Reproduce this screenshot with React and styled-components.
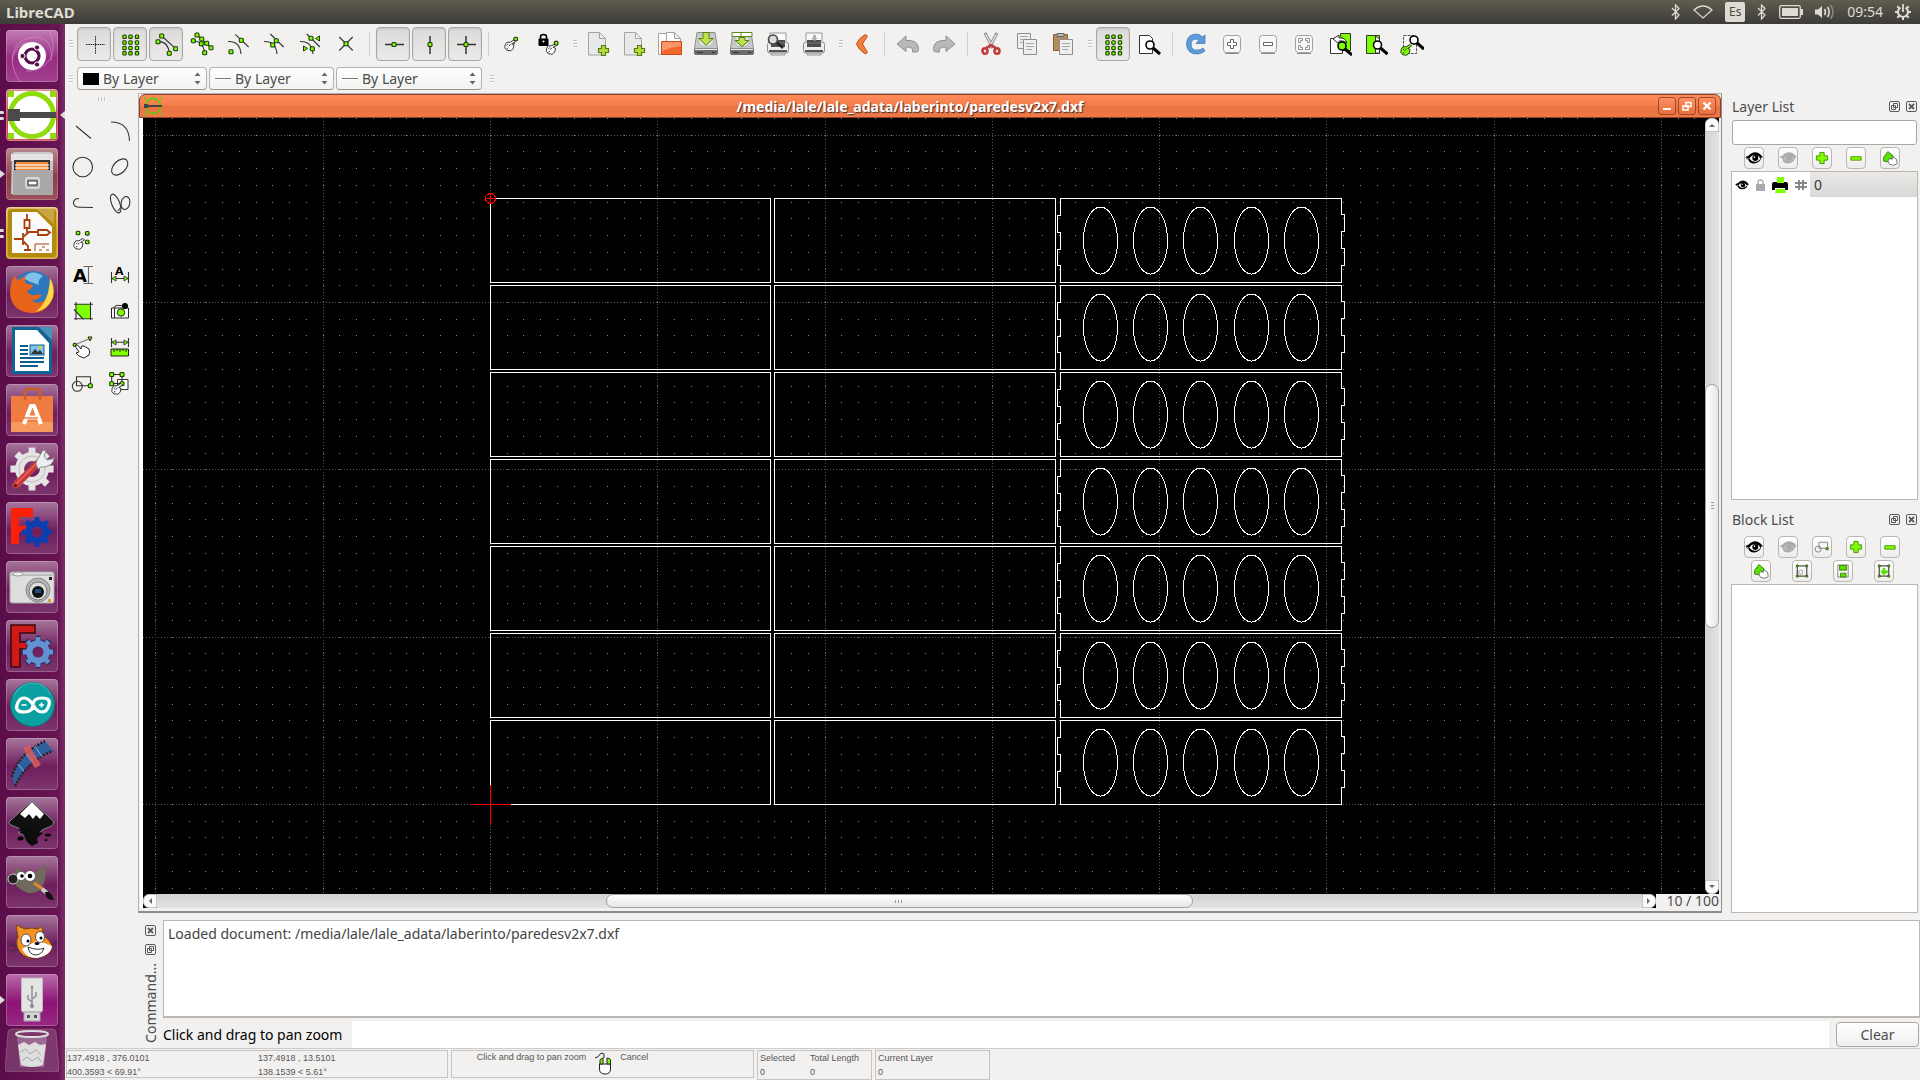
import React from "react";
import styled, { createGlobalStyle, css } from "styled-components";

const UI_FONT = '"Noto Sans", "Open Sans", sans-serif';
const INK = "#4c4c4c";
const LIME = "#7dff00";

const GlobalStyle = createGlobalStyle`
  *, *::before, *::after { box-sizing: border-box; }
  html, body { margin: 0; height: 100%; }
  body { background: #f2f1f0; color: ${INK}; font: 14px/20px ${UI_FONT}; overflow: hidden; }
  button, input, select { font: inherit; color: inherit; margin: 0; }
  svg { display: block; flex: none; }
`;

/* ------------------------------------------------------------ small marks */

const Dot = ({ x, y, r = 2 }) => (
  <rect x={x - r} y={y - r} width={r * 2} height={r * 2} rx="1" fill={LIME} stroke="#1d3a08" strokeWidth="1.1" />
);
const Dots = ({ at, r }) => at.map(([x, y]) => <Dot key={`${x}-${y}`} x={x} y={y} r={r} />);
const Hand = ({ x, y, s = 1, fill = "#fff" }) => (
  <path
    transform={`translate(${x} ${y}) scale(${s})`}
    d="M-6 -1L-4 -4L0 -4L5 -7L7 -5L2 -2L5 -1L4 4L1 6.500L-4 6L-6.500 3ZM-4 0L-2 -2M-1.500 1L.500 -1.500M-4 4l2-1"
    fill={fill} stroke="#222" strokeWidth="1.1" strokeLinejoin="round"
  />
);
const Lens = ({ x, y, fill = "#fff" }) => (
  <g stroke="#000">
    <path d={`M${x + 3} ${y + 3} l7 6`} strokeWidth="3" />
    <circle cx={x} cy={y} r="4" fill={fill} strokeWidth="1.6" />
  </g>
);
const GreenPlus = ({ x, y, s = 1 }) => (
  <path transform={`translate(${x} ${y}) scale(${s})`} d="M-2 -5h4v3h3v4h-3v3h-4v-3h-3v-4h3z" fill="#b6d93c" stroke="#4f8010" strokeWidth="1.2" />
);
const Page = ({ x, y, w, h, fill = "#e9e9e9" }) => (
  <path d={`M${x} ${y}h${w - 6}l6 6v${h - 6}h-${w}z M${x + w - 6} ${y}v6h6`} fill={fill} stroke="#a3a3a3" />
);
const line = { fill: "none", stroke: "#333", strokeWidth: 1.1 };

const Printer = () => (
  <>
    <path d="M4 9V1h16v8" fill="#fafafa" stroke="#999" />
    <rect x="1.500" y="10" width="21" height="11" rx="2.500" fill="#eee" stroke="#8a8a8a" />
    <path d="M5 8h14v7H5z" fill="#4d4d4d" />
    <path d="M5 11h14" stroke="#777" />
    <path d="M3 19h18" stroke="#555" strokeWidth="2" />
    <path d="M5 21h14v2H5z" fill="#ddd" stroke="#999" />
  </>
);
const Drive = () => (
  <>
    <path d="M3 .5h18l2.500 16H.5z" fill="#c9c9c9" stroke="#8b8b8b" />
    <ellipse cx="12" cy="9" rx="7.500" ry="6" fill="#e6e6e6" stroke="#b5b5b5" />
    <path d="M0 17h24v4q0 2-2 2H2q-2 0-2-2z" fill="#6d6d6d" />
    <path d="M1 17.500h22" stroke="#eee" />
    <path d="M3 20.500h6M18 20.500h3" stroke="#333" />
  </>
);
const Magnet = () => <path d="M2 9.500Q14 9 15 22" {...line} />;
const Undo = () => (
  <path d="M1 12L10 4v4.500q12-1 12.500 8 0 4-3 3.500h-3q2-5-6.500-5v4.500z" fill="#b9b9b9" stroke="#8f8f8f" strokeLinejoin="round" />
);
const KeyCap = () => (
  <>
    <rect x="3.500" y="3.500" width="17" height="17" rx="3" fill="#f7f7f7" stroke="#a0a0a0" />
    <path d="M5 21.500h14" stroke="#8a8a8a" />
  </>
);
const Grid = () => (
  <Dots r={1.7} at={[6.5, 12.5, 19].flatMap((x) => [4.7, 10.5, 16, 21.3].map((y) => [x, y]))} />
);
const Eye = ({ muted }) => {
  const c = muted ? "#aaa" : "#000";
  return (
    <>
      <path d="M1 9l3-1q4-5 10-4 4 1 7 6h-2q-1 6-8 7-7 0-7-6l-3-1z" fill={c} />
      <path d="M5 11q3-4 7-4 4 1 6 4-2 4-7 4-4-1-6-4z" fill={muted ? "#bdbdbd" : "#fff"} />
      <circle cx="12" cy="10.500" r="3.500" fill={c} />
      {!muted && <><path d="M1 10l3 3" stroke="#118" strokeWidth="1" /><circle cx="11" cy="9.500" r=".9" fill="#fff" /></>}
    </>
  );
};

const ICONS = {
  cross: <path d="M4 12.500h19M13.500 4v18" stroke="#222" strokeDasharray="1.500 .8" />,
  grid: <Grid />,
  ends: <><path d="M7.700 4L21.700 16.700M4 9.700Q14 9 15.300 21.300" {...line} /><Dots at={[[7.7, 4], [4, 9.7], [21.7, 16.7], [15.3, 21.3]]} /></>,
  onEntity: <><path d="M7 3L21 15.700M3.300 8.700Q13 9 14.700 20.700" {...line} /><Dots at={[[7, 3], [3.3, 8.7], [11.7, 7], [11.3, 11.7], [16.7, 11.3], [21, 15.7], [14.7, 20.7]]} /></>,
  center: <><path d="M9.300 2.300L22.700 15" {...line} /><Magnet /><Dots at={[[15.3, 8.3], [5, 19.7]]} /></>,
  middle: <><path d="M8.300 2L21.700 15" {...line} /><Magnet /><Dots at={[[14.3, 8.7], [10.7, 13]]} /></>,
  distance: <><path d="M8.700 2L22 15" {...line} /><Magnet /><Dots at={[[13, 6.3], [14.3, 16.7]]} /><path d="M21.500 4v5l-4-2.500zM5.500 14v5l4-2.500z" fill={LIME} stroke="#1d3a08" /></>,
  intersect: <><path d="M5.300 5L18.700 18.500M18.700 5L5.300 18.500" {...line} /><Dot x={12} y={11.7} /></>,
  horiz: <><path d="M4 12.500h19" {...line} strokeWidth="1.500" /><Dot x={13} y={12.5} /></>,
  vert: <><path d="M13 4v18" {...line} strokeWidth="1.500" /><Dot x={13} y={12.5} /></>,
  ortho: <><path d="M4 12.500h19M13 4v18" {...line} strokeWidth="1.500" /><Dot x={13} y={12.5} /></>,
  relZero: <><path d="M15 7l-1 5" {...line} /><Hand x={10} y={13.5} s={0.8} /><Dot x={15.7} y={7} r={1.8} /></>,
  lockZero: <><rect x="2.500" y="6.500" width="10" height="7.500" rx="1" /><path d="M4.500 7V5q0-2.500 3-2.500T10.500 5v2" fill="none" stroke="#000" strokeWidth="1.600" /><circle cx="7.500" cy="9.500" r="1" fill="#fff" /><Hand x={15.5} y={17} s={0.8} /><Dot x={20.2} y={11.2} r={1.8} /></>,
  doc: <><Page x={2.5} y={0.5} w={17} h={22.5} /><GreenPlus x={17.5} y={18.5} /></>,
  open: <><Page x={0.5} y={1.5} w={14} h={21} fill="#fbfbfb" /><Page x={8.5} y={0.5} w={14} h={21} fill="#fff" /><path d="M3.500 9.500h20v13h-20z" fill="#f0672c" stroke="#cf4a12" /><path d="M4 10h19v4q-9 1-19 5z" fill="#f9a27b" opacity=".8" /></>,
  save: <><Drive /><path d="M9 .5h6v6h4l-7 7-7-7h4z" fill="#bfe04f" stroke="#4f8010" /></>,
  saveAs: <><Drive /><path d="M2 .5h20v4H2z" fill="#fff" stroke="#5b8a17" /><path d="M11 1v3" stroke="#5b8a17" /><path d="M9 5.500h6v3h4l-7 6-7-6h4z" fill="#bfe04f" stroke="#4f8010" /></>,
  preview: <><Printer /><path d="M9 9l8 7" stroke="#222" strokeWidth="2.500" /><circle cx="7" cy="7.500" r="4.500" fill="#d8dcdc" stroke="#444" strokeWidth="1.600" /></>,
  print: <><Printer /><path d="M11 3h3v3h2l-3.500 3L9 6h2z" fill="#b0b0b0" /></>,
  back: <path d="M14 2.500l2.500 1.500-5 8 5 8.500-2.500 1.500q-7-5-8.500-10 1.500-5 8.500-9.500z" fill="#f0803f" stroke="#c4501a" strokeLinejoin="round" />,
  undo: <Undo />,
  redo: <g transform="translate(24 0) scale(-1 1)"><Undo /></g>,
  cut: <><path d="M6 1l8 15M18 1l-8 15" stroke="#888" strokeWidth="3" /><path d="M6.500 2l7 13M17.500 2l-7 13" stroke="#eee" strokeWidth="1.200" /><g fill="none" stroke="#c23b3b" strokeWidth="2.600"><ellipse cx="6" cy="19" rx="2.500" ry="2.800" /><ellipse cx="18" cy="19" rx="2.500" ry="2.800" /></g><path d="M7 16l5-3 5 3" stroke="#c23b3b" strokeWidth="2.400" fill="none" /></>,
  copy: <><path d="M2.500 1.500h13v15h-13z" fill="#eee" stroke="#8e8e8e" /><path d="M5 4.500h8M5 7.500h6M5 10.500h4" stroke="#aaa" /><path d="M8.500 7.500h13v15h-13z" fill="#eee" stroke="#8e8e8e" /><path d="M11 11.500h8M11 14.500h8M11 17.500h6" stroke="#aaa" /></>,
  paste: <><path d="M2.500 2.500h14v16h-14z" fill="#b58d5c" stroke="#83623a" /><path d="M6 1.500h7v3H6z" fill="#bbb" stroke="#666" /><path d="M8.500 7.500h13v15h-13z" fill="#eee" stroke="#8e8e8e" /><path d="M11 11.500h8M11 14.500h8M11 17.500h6" stroke="#aaa" /></>,
  draft: <><path d="M2.500 3.500h10l3 3v15h-13z" fill="#fff" stroke="#333" /><Lens x={13} y={13} /></>,
  redraw: <path d="M21 3v8.500h-9l3-3.500q-7-3-8 4 0 7 7 6 3 0 5-2l2 3q-4 3-8 3Q3 22 2.500 12 3 2 12.500 2q3.500 0 5.500 3z" fill="#5d9bd8" stroke="#3f7ebd" strokeWidth=".8" />,
  zoomIn: <><KeyCap /><path d="M10.500 7.500h3v3h3v3h-3v3h-3v-3h-3v-3h3z" fill="#fff" stroke="#666" /></>,
  zoomOut: <><KeyCap /><path d="M7.500 10.500h9v3h-9z" fill="#fff" stroke="#666" /></>,
  zoomAuto: <><KeyCap /><path d="M6.500 10.500v-4h4v2h-2v2zM13.500 6.500h4v4h-2v-2h-2zM17.500 13.500v4h-4v-2h2v-2zM10.500 17.500h-4v-4h2v2h2z" fill="#fff" stroke="#777" strokeWidth=".8" /></>,
  zoomPrev: <><path d="M2.500 6.500h12v15h-12z" fill="#fff" stroke="#333" /><path d="M12.500 1.500h10v17h-8z" fill={LIME} stroke="#333" /><path d="M5 7l6-4v3q6-1 8 5-4-3-8-2v3z" fill="#fff" stroke="#222" /><Lens x={14} y={14} fill={LIME} /></>,
  zoomWin: <><path d="M2.500 3.500h13v18h-13z" fill={LIME} stroke="#333" /><path d="M11.500 4l4 3v14h-4z" fill="#fff" stroke="#333" /><Lens x={13.500} y={13} /></>,
  pan: <><path d="M3.500 3.500h10l3 3v15h-13z" fill="#f7f7f7" stroke="#555" strokeDasharray="3 1" /><Hand x={6} y={18} s={0.8} fill={LIME} /><Lens x={14} y={8} /></>,

  line: <path d="M5 6l15 12.500" {...line} />,
  arc: <path d="M3 2q18 0 18.500 19" {...line} />,
  circle: <circle cx="11.700" cy="11" r="9.800" {...line} />,
  ellipse: <ellipse cx="11.700" cy="11" rx="9.800" ry="6" transform="rotate(-45 11.700 11)" {...line} />,
  hook: <path d="M8 6.500Q2.500 6.500 2.500 11t7 4.200l12.500.3" {...line} />,
  spline: <><ellipse cx="7.700" cy="11.500" rx="4" ry="10" transform="rotate(-22 7.700 11.500)" {...line} /><ellipse cx="17.500" cy="11" rx="4.300" ry="6.500" transform="rotate(12 17.500 11)" {...line} /><path d="M13 15l-3 4" {...line} /></>,
  points: <><Dots at={[[7, 5], [16.3, 5.3], [16.3, 14]]} r={1.8} /><Hand x={8} y={16} s={0.8} /></>,
  text: <><text x="2" y="18" fontFamily="DejaVu Sans" fontSize="18" fontWeight="700" fill="#000">A</text><path d="M12.500 2.500H22M12.500 19.500H22M17.500 2.500v17" {...line} stroke="#666" /></>,
  dim: <><text x="7" y="11" fontFamily="DejaVu Sans" fontSize="11" fontWeight="700" fill="#000">A</text><path d="M3.500 8v11M20.500 8v11M4 14.500h16" {...line} /><path d="M8 12v5l-4-2.500zM16 12v5l4-2.500z" fill={LIME} stroke="#222" strokeWidth=".8" /></>,
  hatch: <><path d="M5 4.300h14.500v14.500H12L5 11.500z" fill={LIME} /><path d="M5 2v18M19.500 2v18M3 4.300h19M3 18.800h19M3 9.500l9.500 10" {...line} /></>,
  camera: <><path d="M3.500 8v10h17V8z" fill="#fff" stroke="#222" /><path d="M6.500 8v10M6 7.500q2-3 5-2h3" {...line} /><circle cx="13" cy="12.500" r="3.700" fill={LIME} stroke="#222" /><circle cx="17" cy="6" r="3" /></>,
  modify: <><path d="M3.700 8.700L19 2.500" {...line} stroke="#777" /><Dot x={3.7} y={8.7} r={1.5} /><path d="M17 1h4l-2 4z" fill={LIME} stroke="#222" /><path d="M4 10l2.500-1 3.500 4 .5-3h2.500l5 3q1.500 3 0 6l-5 3q-3-1-5-2l-3-3 3-1z" fill="#fff" stroke="#222" /></>,
  measure: <><path d="M3.500 2v9M20.500 2v9M4 6.300h16" {...line} /><path d="M8 4v5L4 6.300zM16 4v5l4-2.700z" fill={LIME} stroke="#222" strokeWidth=".8" /><path d="M3 13h17.500v7H3z" fill={LIME} stroke="#222" /><path d="M6 13v3M9 13v2M12 13v3M15 13v2M18 13v3" stroke="#222" /></>,
  block: <><path d="M5.500 4.700h14v9H5.500z" {...line} /><circle cx="6.300" cy="14.300" r="5" {...line} /><Dot x={19.3} y={13.7} /></>,
  select: <><path d="M9.500 7.500h10.500v10H9.500z" fill="#fff" stroke="#333" /><path d="M3.700 2.500H14v9H3.700z" {...line} /><Dots at={[[3.7, 2.5], [14, 2.5], [3.7, 11.7], [14, 11.7]]} /><Hand x={9} y={17} s={0.8} /></>,
};

const PANEL_ICONS = {
  eye: <Eye />,
  eyeOff: <Eye muted />,
  plus: <path d="M8 4h5v4h4v5h-4v4H8v-4H4V8h4z" fill={LIME} stroke="#3f8a00" />,
  minus: <path d="M4.500 9h12v4h-12z" fill={LIME} stroke="#3f8a00" />,
  edit: <><path d="M3 10l5-7 6 5-2 5-5 2-4-1z" fill="#5be000" stroke="#2f7a00" /><path d="M8 14l2-3 3 1 1-3 4 3 1 5-4 2-5-1z" fill="#fff" stroke="#666" /></>,
  block: <><path d="M7 5h10v7H7z" fill="none" stroke="#777" /><circle cx="6" cy="13" r="3.500" fill="none" stroke="#777" /><Dot x={16.500} y={12.500} r={1.3} /></>,
  insert: <><path d="M5 4.500h11v12H5z" fill="none" stroke="#555" strokeWidth="1.500" /><circle cx="9" cy="12" r="2.500" fill="none" stroke="#999" /><Dots at={[[5, 4.5], [16, 4.5], [5, 16.500], [16, 16.500]]} r={1.2} /></>,
  floppy: <><path d="M4.500 3.500h12v14h-12z" fill="#fff" stroke="#777" /><path d="M6.500 4h8v5.500h-8zM7.500 13h6.500v4.500H7.500z" fill="#5be000" stroke="#2f7a00" /></>,
  insertNew: <><path d="M5 4.500h11v12H5z" fill="none" stroke="#555" strokeWidth="1.500" /><path d="M9 7h3v3h3v3h-3v2H9v-2H7v-3h2z" fill="#5be000" /><Dots at={[[5, 4.5], [16, 4.5], [5, 16.500], [16, 16.500]]} r={1.2} /></>,
};

/* ------------------------------------------------------------- launcher */

const GearShape = ({ cx, cy, r, teeth = 8, ...rest }) => (
  <g {...rest}>
    <circle cx={cx} cy={cy} r={r * 0.62} fill="none" strokeWidth={r * 0.45} />
    {Array.from({ length: teeth }, (_, i) => (
      <path key={i} d={`M${cx} ${cy - r * 0.75}V${cy - r * 1.08}`} strokeWidth={r * 0.34} transform={`rotate(${(360 / teeth) * i} ${cx} ${cy})`} />
    ))}
  </g>
);

const APPS = [
  { name: "Dash", tint: "#962780", art: <><g fill="none" stroke="#dd9bd0" strokeWidth=".7" opacity=".8"><path d="M6 30Q8 8 30 7q18 2 15 24M14 52Q-4 24 20 12M44 0q8 24-4 34-8 8-20 7" /></g><circle cx="26" cy="26" r="14" fill="#fff" /><circle cx="26" cy="26" r="7" fill="none" stroke="#5a0f4a" strokeWidth="3.200" /><g fill="#5a0f4a" stroke="#fff"><circle cx="16.500" cy="26" r="2.600" /><circle cx="31" cy="17.500" r="2.600" /><circle cx="31" cy="34.500" r="2.600" /></g></> },
  { name: "LibreCAD", tint: "#c8404e", pips: 2, active: true, art: <><rect x="2" y="2" width="48" height="48" fill="#fff" /><path d="M2 2h6v6H2zM44 2h6v6h-6zM2 44h6v6H2zM44 44h6v6h-6z" fill="#8fdc0a" /><circle cx="26" cy="26" r="21.500" fill="none" stroke="#8fdc0a" strokeWidth="5" /><path d="M2 20h12v3h36v6H14v3H2z" fill="#4a4a4a" /></> },
  { name: "Files", tint: "#8d3a44", pips: 1, art: <><path d="M6 6q1-2 3-2h35q2 0 3 2v40H5z" fill="#c9c9c9" /><path d="M5 6h42v7H5z" fill="#e3e3e3" /><path d="M8 12h36v12H8z" fill="#333" /><path d="M10 14h32v10H10z" fill="#f08b3e" /><path d="M9 17h34M9 20h34" stroke="#fbe3c8" strokeWidth="1.500" /><path d="M7 22h40v25H7z" fill="#a9a9a9" /><rect x="20" y="30" width="13" height="10" rx="2" fill="#a9a9a9" stroke="#d7d7d7" strokeWidth="2" /><rect x="22" y="33" width="9" height="4" fill="#fff" stroke="#333" /></> },
  { name: "KiCad", tint: "#c79c18", pips: 2, art: <><rect x="2" y="2" width="48" height="48" rx="3" fill="#b58a0c" /><path d="M6 5h25l15 15v26H6z" fill="#fbfbfb" /><path d="M31 2h17v15z" fill="#caa545" /><g fill="none" stroke="#a9400c" strokeWidth="1.800"><path d="M21 7v6M18.500 13h5v8h-5zM21 21v6M8 32h9M17 26v12M17 30l6-5h9M32 23h9l3 2.500-3 2.500h-9zM17 34l5 5v4M18 43h7" /><path d="M29 44v-7h14M36 40h3M33 43h3M40 43h3" strokeWidth="1" /></g></> },
  { name: "Firefox", art: <><circle cx="27" cy="25" r="20" fill="#2d78bd" /><path d="M17 12Q26 2 37 10q-6 4-4 9-8-2-16-7z" fill="#7fc4e8" /><path d="M44 12q6 10 3 20-6 15-21 15Q6 46 4 28 4 18 8 10q2 3 5 4 3-3 7-4-3 5 1 8l6 1q0 3-6 6 2 5 9 4 3-1 6 0-4 6-11 5 8 6 15-1 5-8 4-21z" fill="#e8641b" /><path d="M44 12q5 9 3 19-5 13-18 15 14-9 15-34z" fill="#fbd84a" /></> },
  { name: "LibreOffice Writer", art: <><path d="M6 2h27l13 13v34H6z" fill="#0f6595" /><path d="M9 5h22l12 13v28H9z" fill="#fff" /><path d="M33 2h13v13z" fill="#4793ba" /><path d="M14 21h8M14 25h8M14 29h8M14 33h24M14 37h24M14 41h18" stroke="#0f5f8e" strokeWidth="2" /><rect x="24" y="20" width="14" height="10" fill="#7cc4ea" stroke="#0f5f8e" /><path d="M25 29l4-5 3 3 2-2 3 4z" fill="#333" /><circle cx="34" cy="22.500" r="1.500" fill="#fc0" /></> },
  { name: "Ubuntu Software", art: <><path d="M5 12h42v36H5z" fill="#f07b40" /><path d="M5 38h42v10H5z" fill="#f5995f" /><path d="M19 16V8q0-3 3-3h9q3 0 3 3v8" fill="none" stroke="#cf5d28" strokeWidth="2.500" /><path d="M18 40l7-18h3l7 18M20 33.500h13" stroke="#fff" strokeWidth="4" fill="none" /><path d="M18 34h14" stroke="#f07b40" strokeWidth="1.500" /></> },
  { name: "System Settings", art: <><GearShape cx={26} cy={26} r={20} stroke="#e4e4e4" /><circle cx="26" cy="26" r="13" fill="none" stroke="#bdbdbd" /><path d="M10 42L32 20" stroke="#c63a3a" strokeWidth="7" strokeLinecap="round" /><path d="M10 41L31 20" stroke="#e66" strokeWidth="1.500" /><path d="M30 21q0-4 3-7l4-7 3 1-2 5 3 4 5-1 2-2q0 5-4 8-5 3-9 2l-3 2z" fill="#eee" stroke="#888" /><circle cx="9.500" cy="42.500" r="1.500" fill="#611" /></> },
  { name: "FreeCAD", art: <><path d="M5 6h22v9H13v9h7v6h-7v12H5z" fill="#fb2008" /><GearShape cx={31} cy={30} r={14} stroke="#0b3fb0" /></> },
  { name: "Shotwell", art: <><rect x="4" y="11" width="44" height="31" rx="2" fill="#dedede" stroke="#aaa" /><path d="M5 14h42" stroke="#999" /><ellipse cx="12" cy="13" rx="5" ry="2" fill="#eee" stroke="#999" /><circle cx="32" cy="29" r="12" fill="#b4b4b4" stroke="#888" /><circle cx="32" cy="30" r="9" fill="#ddd" stroke="#777" /><circle cx="32" cy="31" r="6" fill="#111" /><path d="M29 28h6v4h-6z" fill="#224a86" /><path d="M43 16h3v3h-3z" fill="#222" /><path d="M42 38h3v3h-3z" fill="#e59a2d" /></> },
  { name: "FreeCAD Daily", art: <><path d="M5 5h24v8H14v9h8v7h-8v18H5z" fill="#cf1a1a" stroke="#3a0808" strokeWidth="1.500" /><GearShape cx={32} cy={32} r={15} stroke="#1d2c57" /><GearShape cx={32} cy={32} r={14} stroke="#6392d2" /></> },
  { name: "Arduino", art: <><circle cx="26.500" cy="25.500" r="22" fill="#0aa0a2" stroke="#087476" /><path d="M8 16Q16 3 27 4q12 0 18 12" fill="none" stroke="#7fd3d3" opacity=".6" /><path d="M27 26q-4-7-9-7t-7 7 7 7 9-7 9-7 7 7-7 7-9-7z" fill="none" stroke="#fff" strokeWidth="3.200" /><path d="M15.500 26h5M33 26h5M35.500 23.500v5" stroke="#fff" strokeWidth="1.600" /></> },
  { name: "Video Editor", art: <><path d="M6 39Q12 16 39 3l8 10Q22 20 9 48z" fill="#2f5f9d" /><path d="M6 39Q12 16 39 3M9 48Q22 22 47 13" fill="none" stroke="#222" strokeWidth="2.500" strokeDasharray="2 1.500" /><path d="M20 16l10 13M29 8l7 11M12 26l6 7" stroke="#8fb3de" /><path d="M17 10l6-3 12 20-6 3z" fill="#dd5c5c" opacity=".85" /></> },
  { name: "Inkscape", art: <><path d="M26 4L47 24q2 4-4 6l-7 3q-2 4-9 4l-9 1-6-2 5-3L5 28q-4-2 0-5z" fill="#111" stroke="#999" strokeWidth=".8" /><path d="M26 5l12 12-4 5-4-4-3 4-4-5-4 4-5-4z" fill="#fff" /><path d="M12 32q14-5 16 2l9 2-6 5 1 5-6 3-5-4-3-7z" fill="#0c0c0c" /><ellipse cx="14.500" cy="41.500" rx="3" ry="2" /><ellipse cx="42" cy="38" rx="3" ry="1.500" /><ellipse cx="40" cy="43" rx="1.500" ry="1" /></> },
  { name: "GIMP", art: <><path d="M8 17l3-6 8 6q14 1 21-9 1 18-6 26-8 7-20-1-8-5-6-16z" fill="#6f6a5c" /><circle cx="7" cy="23" r="5" fill="#222" stroke="#ccc" /><circle cx="15" cy="20" r="4" fill="#fff" /><circle cx="24" cy="20" r="5" fill="#fff" /><circle cx="16" cy="20" r="1.800" /><circle cx="24" cy="20" r="2.300" /><path d="M28 27l10 7" stroke="#e0892d" strokeWidth="3" /><path d="M36 33l5 4" stroke="#ccc" strokeWidth="4" /><path d="M39 36q6-2 9 8-8 1-9-8z" fill="#111" /></> },
  { name: "Scratch", art: <><path d="M10 10l9 4q7-2 13 0l4-3 1 9q8 6 9 12-1 9-17 11-14 1-18-12-1-6 1-9z" fill="#f59122" stroke="#7a4309" /><path d="M16 34q6-4 15-8 9 2 15 5-1 9-15 12-11 0-15-9z" fill="#fff" /><ellipse cx="20" cy="25" rx="5" ry="6" fill="#fff" stroke="#555" /><ellipse cx="34" cy="22" rx="4.500" ry="5.500" fill="#fff" stroke="#555" /><circle cx="22" cy="26" r="1.500" /><circle cx="35" cy="23" r="1.500" /><path d="M22 32q10 4 16 1-2 7-9 7-6-1-7-8z" fill="#fff" stroke="#333" /><ellipse cx="31" cy="28.500" rx="2.500" ry="1.500" /><path d="M3 28l8 4M3 36l8-1M46 30l4-2" stroke="#333" /></> },
  { name: "USB Drive", tint: "#8a0d72", pips: 1, art: <><path d="M15.500 4h21v32q0 2-2 2h-17q-2 0-2-2z" fill="#e4e4e4" stroke="#bbb" /><path d="M18 38h16v9H18z" fill="#d3d3d3" stroke="#aaa" /><path d="M21 41h3v3h-3zM28 41h3v3h-3z" fill="#555" /><path d="M26 12v20M26 28l-4-3v-4M26 25l4-3v-4" stroke="#888" strokeWidth="1.400" fill="none" /><circle cx="26" cy="32" r="2" fill="#888" /><path d="M24.500 14h3L26 11z" fill="#888" /></> },
];

const TrashArt = () => (
  <svg width="54" height="44" viewBox="0 0 54 44" aria-hidden="true">
    <path d="M6 1h42q2 0 3 3l3 37q0 3-3 3H3q-3 0-3-3L3 4q1-3 3-3z" fill="#fff" fillOpacity=".16" stroke="#fff" strokeOpacity=".2" />
    <path d="M12 8h30l-3 31H15z" fill="#fff" fillOpacity=".25" />
    <ellipse cx="27" cy="6" rx="16" ry="3" fill="none" stroke="#ddd" strokeWidth="2" />
    <path d="M13 17l6-3 5 3 6-3 5 3 6-1-3 21q-11 4-22 0z" fill="#dedede" />
    <path d="M15 24l6-3 4 5 6-4 5 5M17 33l5-4 5 4 6-4 3 5" fill="none" stroke="#a8a8a8" strokeWidth="1" />
  </svg>
);

const Launcher = styled.nav`
  width: 65px;
  flex: none;
  padding-top: 6px;
  overflow: hidden;
  background: linear-gradient(90deg, #5a0d49, #681453 90%, #7b3069);
`;
const AppList = styled.ul`
  display: grid;
  gap: 7px;
  margin: 0;
  padding: 0;
  list-style: none;
`;
const AppItem = styled.li`
  position: relative;
  height: 52px;
  padding-left: 6px;
`;
const Tile = styled.button`
  display: block;
  width: 52px;
  height: 52px;
  padding: 0;
  overflow: hidden;
  border: 0;
  border-radius: 4px;
  background: linear-gradient(rgba(255, 255, 255, 0.4), rgba(255, 255, 255, 0.02) 55%, rgba(255, 255, 255, 0.12)),
    ${(p) => p.$tint || "#6b1a59"};
  box-shadow: inset 0 0 0 1px rgba(255, 255, 255, 0.22);
`;
const Pips = styled.span`
  position: absolute;
  left: 0;
  top: 20px;
  display: grid;
  align-content: center;
  gap: 3px;
  height: 12px;
`;
const Pip = styled.i`
  width: 4px;
  height: 3px;
  border-radius: 0 2px 2px 0;
  background: #ddd;
`;
const Arrow = styled.i`
  width: 0;
  border: 4px solid transparent;
  border-right-width: 0;
  border-left: 5px solid #ddd;
`;
const FocusArrow = styled.i`
  position: absolute;
  right: 0;
  top: 22px;
  border: 4px solid transparent;
  border-left-width: 0;
  border-right: 5px solid #ddd;
`;
const Trash = styled.button`
  display: block;
  margin: 2px 0 0 5px;
  padding: 0;
  border: 0;
  background: none;
`;

/* -------------------------------------------------------------- top panel */

const Panel = styled.header`
  display: flex;
  align-items: center;
  gap: 12px;
  height: 24px;
  padding: 0 9px 0 6px;
  background: linear-gradient(#5f5c50, #3c3b37);
  color: #dfdbd2;
`;
const AppName = styled.strong`
  margin-right: auto;
  font-size: 15px;
`;
const Keyboard = styled.span`
  width: 20px;
  height: 20px;
  border-radius: 2px;
  background: #dfdbd2;
  color: #4a473e;
  font-size: 12px;
  line-height: 20px;
  text-align: center;
`;
const Bluetooth = () => (
  <svg width="10" height="16" viewBox="0 0 10 16" fill="none" stroke="#dfdbd2" strokeWidth="1.300"><path d="M1 4l7 7-3.500 4V1L8 4.500l-7 7" /></svg>
);

/* --------------------------------------------------------------- toolbars */

const Shell = styled.div`
  display: flex;
  flex-direction: column;
  height: 100vh;
`;
const Desktop = styled.div`
  display: flex;
  flex: 1;
  min-height: 0;
`;
const AppWindow = styled.main`
  display: flex;
  flex-direction: column;
  flex: 1;
  min-width: 0;
`;
const ToolbarRow = styled.div`
  display: flex;
  gap: 4px;
  padding-top: ${(p) => p.$top}px;
`;
const Toolbar = styled.div`
  display: flex;
  align-items: center;
  gap: 2px;
`;
const Grip = styled.i`
  width: ${(p) => (p.$across ? 8 : 4)}px;
  height: ${(p) => (p.$across ? 4 : 8)}px;
  margin: ${(p) => (p.$across ? "0 auto" : "0 2px 0 4px")};
  background: repeating-linear-gradient(${(p) => (p.$across ? "90deg" : "180deg")}, #c6c4c2 0 1px, #fbfbfb 1px 2px, transparent 2px 3px);
`;
const Separator = styled.i`
  width: 1px;
  height: 24px;
  margin: 0 4px;
  background: #d4d2d0;
`;
const pressed = css`
  border-color: #a9a7a5;
  background: linear-gradient(#dcdad9, #ebeae9);
  box-shadow: inset 0 1px 2px rgba(0, 0, 0, 0.12);
`;
const ToolButton = styled.button`
  display: grid;
  place-items: center;
  width: ${(p) => p.$width || 34}px;
  height: 34px;
  padding: 0;
  border: 1px solid transparent;
  border-radius: 4px;
  background: none;
  ${(p) => p.$on && pressed}
`;
const Field = styled.label`
  display: flex;
  align-items: center;
  gap: 4px;
  width: ${(p) => p.$width}px;
  height: 23px;
  padding: 0 5px;
  border: 1px solid #b3b0ad;
  border-bottom-color: #98958f;
  border-radius: 4px;
  background: linear-gradient(#fff, #f3f2f1);
`;
const Swatch = styled.i`
  width: 16px;
  height: ${(p) => (p.$line ? 3 : 12)}px;
  background: ${(p) => (p.$line ? "linear-gradient(#fff 1px, #777 1px 2px, #fff 2px)" : "#000")};
`;
const Select = styled.select`
  flex: 1;
  min-width: 0;
  padding: 0;
  border: 0;
  outline: 0;
  appearance: none;
  background: none;
  line-height: 20px;
`;

const Icon = ({ name }) => <svg width="24" height="24" viewBox="0 0 24 24" aria-hidden="true">{ICONS[name]}</svg>;

const TOOLBARS = [
  [["cross", 1], ["grid", 1], ["ends", 1], "onEntity", "center", "middle", "distance", "intersect", null, ["horiz", 1], ["vert", 1], ["ortho", 1], null, "relZero", "lockZero"],
  ["doc", "doc", "open", "save", "saveAs", "preview", "print"],
  [["back", 0, 31], null, "undo", "redo", null, "cut", "copy", "paste"],
  [["grid", 1], "draft", null, "redraw", "zoomIn", "zoomOut", "zoomAuto", "zoomPrev", "zoomWin", "pan"],
];

function PenField({ label, width, isLine }) {
  return (
    <Field $width={width}>
      <Swatch $line={isLine} />
      <Select aria-label={label}><option>By Layer</option></Select>
      <svg width="7" height="13" viewBox="0 0 7 13"><path d="M.5 4L3.500 .5 6.500 4zM.5 9L3.500 12.500 6.500 9z" fill="#666" /></svg>
    </Field>
  );
}

/* ------------------------------------------------------------ MDI window */

const Workspace = styled.div`
  display: flex;
  flex: 1;
  min-height: 0;
  padding: 3px 2px 0 0;
`;
const ToolPalette = styled.div`
  display: flex;
  flex-direction: column;
  width: 73px;
  padding-top: 4px;
`;
const PaletteGrid = styled.div`
  display: grid;
  grid-template-columns: 34px 34px;
  gap: 2px 3px;
  padding: 14px 0 0 1px;
`;
const Document = styled.section`
  display: flex;
  flex-direction: column;
  flex: 1;
  min-width: 0;
  border: 1px solid #b5b3b1;
  border-right-color: #8f8d8b;
  border-bottom: 2px solid #8f8d8b;
  background: #f2f1f0;
`;
const TitleBar = styled.div`
  display: flex;
  align-items: center;
  gap: 2px;
  height: 24px;
  padding: 0 4px;
  border: 1px solid #8a4328;
  border-radius: 6px 6px 0 0;
  background: linear-gradient(#ff8b5b, #f37e4b 50%, #ea7342 50%, #ef7846);
`;
const DocTitle = styled.h1`
  flex: 1;
  margin: 0;
  padding-top: 2px;
  overflow: hidden;
  color: #fff;
  font-size: 14px;
  font-weight: 700;
  line-height: 20px;
  text-align: center;
  text-shadow: 1px 1px 1px #333;
  white-space: nowrap;
`;
const WindowButton = styled.button`
  display: grid;
  place-items: center;
  width: 18px;
  height: 18px;
  padding: 0;
  border: 1px solid #9c4a2a;
  border-radius: 3px;
  background: linear-gradient(#ff8f61, #e96f3e);
`;
const View = styled.div`
  display: grid;
  grid-template: minmax(0, 1fr) 14px / minmax(0, 1fr) 14px;
  flex: 1;
  min-height: 0;
  margin: 0 2px 3px 1px;
  border-left: 3px solid #fff;
`;
const Sheet = styled.svg`
  width: 100%;
  height: 100%;
  background: #000;
`;
const ScrollBar = styled.div`
  display: flex;
  flex-direction: ${(p) => (p.$vertical ? "column" : "row")};
  flex: 1;
  min-width: 0;
  background: #000;
`;
const ScrollArrow = styled.button`
  display: grid;
  place-items: center;
  flex: none;
  width: 14px;
  height: 14px;
  padding: 0;
  border: 1px solid #c9c7c5;
  border-radius: ${(p) => p.$radius};
  background: #fbfbfb;
`;
const Track = styled.div`
  display: grid;
  flex: 1;
  background: linear-gradient(${(p) => (p.$vertical ? "90deg" : "180deg")}, #d4d2d1, #e4e3e2);
  grid-template: ${(p) => (p.$vertical ? "251fr 244fr 251fr / 1fr" : "1fr / 449fr 586fr 449fr")};
`;
const Thumb = styled.div`
  display: grid;
  place-items: center;
  border: 1px solid #a3a19f;
  border-radius: 7px;
  background: linear-gradient(${(p) => (p.$vertical ? "90deg" : "180deg")}, #fff, #e8e7e6);
  grid-area: ${(p) => (p.$vertical ? "2 / 1" : "1 / 2")};
`;
const ThumbGrip = styled.i`
  width: ${(p) => (p.$vertical ? 3 : 8)}px;
  height: ${(p) => (p.$vertical ? 8 : 3)}px;
  background: repeating-linear-gradient(${(p) => (p.$vertical ? "180deg" : "90deg")}, #999 0 1px, transparent 1px 3px);
`;
const BottomStrip = styled.div`
  display: flex;
  grid-column: 1 / -1;
  min-width: 0;
`;
const GridStatus = styled.span`
  width: 63px;
  line-height: 14px;
  text-align: right;
`;

const STEP = 16.73;
const GRID_X = 12.8;
const GRID_Y = 17.2;

function Drawing() {
  const dots = [];
  const count = 160;
  for (let i = 0; i < count; i += 1) {
    for (let j = -1; j < 100; j += 1) {
      dots.push(`M${Math.floor(GRID_X + STEP * i)} ${Math.floor(GRID_Y + STEP * j)}h1v1h-1z`);
    }
  }
  const rows = [0, 1, 2, 3, 4, 5, 6];
  return (
    <Sheet shapeRendering="crispEdges" role="img" aria-label="Maze wall parts">
      <path d={dots.join("")} fill="#858585" />
      <g stroke="#555" strokeDasharray="1 2">
        {Array.from({ length: 16 }, (_, i) => {
          const x = Math.floor(GRID_X + STEP * 10 * i) + 0.5;
          const y = Math.floor(GRID_Y + STEP * 10 * i) + 0.5;
          return <path key={i} d={`M${x} 0V2000M0 ${y}H3000`} />;
        })}
      </g>
      <g fill="none" stroke="#fff">
        {rows.map((row) => (
          <g key={row} transform={`translate(347.5 ${80.5 + row * 87})`}>
            <path d="M0 0H280V84H0zM284 0H565V84H284z" />
            <path d="M570 0H851V16H854V33H851V50H854V67H851V84H570V67H567V51H570V34H567V17H570z" />
            {[610, 660, 710, 761, 811].map((cx) => <ellipse key={cx} cx={cx} cy="42" rx="17" ry="33.500" />)}
          </g>
        ))}
      </g>
      <g fill="none" stroke="#f00">
        <path d="M328 686.5h40M347.500 667v40M342 80.5h11M347.500 75v11" />
        <circle cx="347.500" cy="80.500" r="5" />
      </g>
    </Sheet>
  );
}

/* ------------------------------------------------------------ side docks */

const SideDocks = styled.aside`
  display: flex;
  flex-direction: column;
  width: 187px;
  margin-left: 9px;
`;
const Dock = styled.section`
  display: flex;
  flex: ${(p) => p.$share} 1 0;
  flex-direction: column;
  min-height: 0;
`;
const DockHeader = styled.div`
  display: flex;
  align-items: center;
  gap: 6px;
  height: ${(p) => (p.$spaced ? 36 : 27)}px;
  padding: ${(p) => (p.$spaced ? 4 : 0)}px 1px 0 0;
`;
const DockTitle = styled.h2`
  flex: 1;
  margin: 0 0 0 1px;
  font-size: 14px;
  font-weight: 400;
  line-height: 20px;
`;
const DockButton = styled.button`
  width: 11px;
  height: 11px;
  padding: 0;
  border: 0;
  background: none;
`;
const Filter = styled.input`
  flex: none;
  height: 25px;
  margin: 0 1px 2px;
  padding: 0 4px;
  border: 1px solid #a9a6a3;
  border-radius: 3px;
  background: #fff;
`;
const ButtonRow = styled.div`
  display: flex;
  gap: ${(p) => (p.$wide ? 21 : 14)}px;
  padding-left: ${(p) => (p.$wide ? 20 : 13)}px;
  margin-bottom: 2px;
`;
const MiniButton = styled.button`
  display: grid;
  place-items: center;
  width: 20px;
  height: 22px;
  padding: 0;
  border: 1px solid #b9b6b3;
  border-radius: 4px;
  background: linear-gradient(#fff, #eeedec);
`;
const ListBox = styled.div`
  flex: 1;
  border: 1px solid #bab7b4;
  background: #fff;
`;
const LayerTable = styled.table`
  width: 100%;
  border-collapse: collapse;
  color: #333;

  td { height: 25px; padding: 0; }
  td:last-child { width: 107px; padding-left: 4px; background: linear-gradient(#eae9e8, #d9d8d7); }
`;
const LayerFlags = styled.div`
  display: flex;
  align-items: center;
  gap: 7px;
  padding-left: 3px;
`;

const PanelIcon = ({ name, size = 18 }) => (
  <svg width={size} height={size} viewBox="0 0 21 21" aria-hidden="true">{PANEL_ICONS[name]}</svg>
);
const FloatGlyph = () => (
  <svg width="11" height="11" viewBox="0 0 11 11" fill="none" stroke="#5a5a5a"><rect x=".5" y=".5" width="10" height="10" rx="1.500" /><path d="M4.500 2.500h4v4h-4zM2.500 4.500h4v4h-4z" /></svg>
);
const CloseGlyph = () => (
  <svg width="11" height="11" viewBox="0 0 11 11" fill="none" stroke="#5a5a5a"><rect x=".5" y=".5" width="10" height="10" rx="1.500" /><path d="M3 3l5 5M8 3L3 8" strokeWidth="1.800" /></svg>
);
const FloatButton = () => <DockButton aria-label="Float"><FloatGlyph /></DockButton>;
const CloseButton = () => <DockButton aria-label="Close"><CloseGlyph /></DockButton>;
const Buttons = ({ names }) => names.map((n) => <MiniButton key={n} aria-label={n}><PanelIcon name={n} /></MiniButton>);

/* ----------------------------------------------------------- command dock */

const CommandDock = styled.section`
  display: flex;
  gap: 7px;
  height: 128px;
  margin-top: 7px;
  padding: 0 0 0 80px;
`;
const CommandRail = styled.div`
  display: flex;
  flex-direction: column;
  align-items: center;
  gap: 8px;
  width: 11px;
  padding-top: 5px;
`;
const CommandTitle = styled.h2`
  margin: 0;
  font-size: 14px;
  font-weight: 400;
  line-height: 20px;
  transform: rotate(180deg);
  writing-mode: vertical-rl;
`;
const CommandBody = styled.div`
  display: flex;
  flex: 1;
  flex-direction: column;
  min-width: 0;
`;
const Log = styled.div`
  flex: 1;
  padding: 3px 4px;
  border: 1px solid #bab7b4;
  border-bottom-width: 2px;
  background: #fff;
  color: #444;
`;
const PromptRow = styled.div`
  display: flex;
  align-items: center;
  height: 27px;
  margin-top: 3px;
  color: #000;
`;
const PromptLabel = styled.label`
  min-width: 182px;
`;
const PromptInput = styled.input`
  flex: 1;
  align-self: stretch;
  min-width: 0;
  margin: 0 7px;
  border: 0;
  background: #fff;
`;
const ClearButton = styled.button`
  width: 83px;
  height: 25px;
  margin-right: 1px;
  border: 1px solid #aaa7a4;
  border-radius: 4px;
  background: linear-gradient(#fff, #f0efee);
  color: ${INK};
  line-height: 20px;
`;

/* -------------------------------------------------------------- statusbar */

const StatusBar = styled.footer`
  display: flex;
  gap: 3px;
  height: 32px;
  padding: 1px 0 0 1px;
  border-top: 1px solid #cfcdcb;
  color: #555;
  font: 9px/14px "Liberation Sans", Arial, sans-serif;
`;
const StatusFrame = styled.div`
  display: flex;
  width: ${(p) => p.$width}px;
  height: ${(p) => (p.$tall ? 30 : 28)}px;
  border: 1px solid #c6c4c2;
`;
const StatusCell = styled.div`
  flex: ${(p) => (p.$width ? "none" : 1)};
  width: ${(p) => p.$width || 0}px;
  padding-left: ${(p) => (p.$plain ? 2 : 0)}px;
  & + & { border-left: ${(p) => (p.$plain ? 0 : 1)}px solid #c6c4c2; padding-left: 2px; }
`;
const MouseHints = styled(StatusFrame)`
  justify-content: center;
  gap: 8px;
  padding-right: 80px;
  line-height: 12px;
`;

export default function App() {
  return (
    <Shell>
      <GlobalStyle />
      <Panel>
        <AppName>LibreCAD</AppName>
        <Bluetooth />
        <svg width="20" height="14" viewBox="0 0 20 14" fill="none" stroke="#dfdbd2" strokeWidth="1.200"><path d="M1 5q9-8 18 0l-9 8z" /></svg>
        <Keyboard>Es</Keyboard>
        <Bluetooth />
        <svg width="24" height="14" viewBox="0 0 24 14"><rect x=".7" y=".7" width="20.600" height="12.600" rx="1.500" fill="none" stroke="#dfdbd2" strokeWidth="1.300" /><path d="M3 3h16v8H3zM22 4h2v6h-2z" fill="#dfdbd2" /></svg>
        <svg width="20" height="16" viewBox="0 0 20 16" fill="none" stroke="#dfdbd2" strokeWidth="1.600"><path d="M0 5.500h3L7 2v12l-4-3.500H0z" fill="#dfdbd2" stroke="none" /><path d="M9.500 5q2 3 0 6M12.500 3q3.500 5 0 10" /><path d="M15.500 1q5 7 0 14" stroke="#8a877f" /></svg>
        <time>09:54</time>
        <svg width="16" height="16" viewBox="0 0 16 16" fill="none" stroke="#dfdbd2"><path d="M5.500 3.600a5 5 0 1 0 5 0" strokeWidth="2" /><path d="M8 0v8" strokeWidth="1.800" /><path d="M0 8h3M13 8h3M8 13v3M2.300 2.300l2 2M13.700 2.300l-2 2M2.300 13.700l2-2M13.700 13.700l-2-2" strokeWidth="2" /></svg>
      </Panel>

      <Desktop>
        <Launcher aria-label="Launcher">
          <AppList>
            {APPS.map((app) => (
              <AppItem key={app.name}>
                <Tile $tint={app.tint} aria-label={app.name}>
                  <svg width="52" height="52" viewBox="0 0 52 52" aria-hidden="true">{app.art}</svg>
                </Tile>
                {app.pips === 1 && <Pips><Arrow /></Pips>}
                {app.pips === 2 && <Pips><Pip /><Pip /></Pips>}
                {app.active && <FocusArrow />}
              </AppItem>
            ))}
          </AppList>
          <Trash aria-label="Trash"><TrashArt /></Trash>
        </Launcher>

        <AppWindow>
          <ToolbarRow $top={3}>
            {TOOLBARS.map((items, t) => (
              <Toolbar key={t}>
                <Grip />
                {items.map((item, i) => {
                  if (!item) return <Separator key={i} />;
                  const [name, on, width] = [].concat(item);
                  return <ToolButton key={i} $on={on} $width={width} aria-label={name}><Icon name={name} /></ToolButton>;
                })}
              </Toolbar>
            ))}
          </ToolbarRow>
          <ToolbarRow $top={6}>
            <Toolbar>
              <Grip />
              <PenField label="Pen color" width={130} />
              <PenField label="Pen width" width={125} isLine />
              <PenField label="Line type" width={146} isLine />
            </Toolbar>
            <Toolbar><Grip /></Toolbar>
          </ToolbarRow>

          <Workspace>
            <ToolPalette>
              <Grip $across />
              <PaletteGrid>
                {["line", "arc", "circle", "ellipse", "hook", "spline", "points", "", "text", "dim", "hatch", "camera", "modify", "measure", "block", "select"].map((name) =>
                  name ? <ToolButton key={name} aria-label={name}><Icon name={name} /></ToolButton> : <span key="gap" />
                )}
              </PaletteGrid>
            </ToolPalette>

            <Document>
              <TitleBar>
                <svg width="18" height="18" viewBox="0 0 18 18"><circle cx="9" cy="9" r="7.500" fill="none" stroke="#6cc516" strokeWidth="1.800" /><path d="M0 0h2v2H0zM16 0h2v2h-2zM0 16h2v2H0zM16 16h2v2h-2z" fill="#6cc516" /><path d="M0 7h4v1h14v2H4v1H0z" fill="#444" /></svg>
                <DocTitle>/media/lale/lale_adata/laberinto/paredesv2x7.dxf</DocTitle>
                <WindowButton aria-label="Minimize"><svg width="12" height="12"><path d="M2 9h8" stroke="#fff" strokeWidth="2" /></svg></WindowButton>
                <WindowButton aria-label="Restore"><svg width="12" height="12" fill="none" stroke="#fff" strokeWidth="1.500"><path d="M5 2.500h5v4H5zM2 6h5v4H2z" /></svg></WindowButton>
                <WindowButton aria-label="Close"><svg width="12" height="12"><path d="M2.500 2.500l7 7M9.500 2.500l-7 7" stroke="#fff" strokeWidth="2.400" /></svg></WindowButton>
              </TitleBar>
              <View>
                <Drawing />
                <ScrollBar $vertical>
                  <ScrollArrow $radius="6px 6px 0 0" aria-label="Scroll up"><svg width="6" height="4"><path d="M0 4l3-3 3 3z" fill="#666" /></svg></ScrollArrow>
                  <Track $vertical><Thumb $vertical><ThumbGrip $vertical /></Thumb></Track>
                  <ScrollArrow $radius="0 0 6px 6px" aria-label="Scroll down"><svg width="6" height="4"><path d="M0 0l3 3 3-3z" fill="#666" /></svg></ScrollArrow>
                </ScrollBar>
                <BottomStrip>
                  <ScrollBar>
                    <ScrollArrow $radius="6px 0 0 6px" aria-label="Scroll left"><svg width="4" height="6"><path d="M4 0L1 3l3 3z" fill="#666" /></svg></ScrollArrow>
                    <Track><Thumb><ThumbGrip /></Thumb></Track>
                    <ScrollArrow $radius="0 6px 6px 0" aria-label="Scroll right"><svg width="4" height="6"><path d="M0 0l3 3-3 3z" fill="#666" /></svg></ScrollArrow>
                  </ScrollBar>
                  <GridStatus>10 / 100</GridStatus>
                </BottomStrip>
              </View>
            </Document>

            <SideDocks>
              <Dock $share={406}>
                <DockHeader><DockTitle>Layer List</DockTitle><FloatButton /><CloseButton /></DockHeader>
                <Filter aria-label="Filter layers" />
                <ButtonRow><Buttons names={["eye", "eyeOff", "plus", "minus", "edit"]} /></ButtonRow>
                <ListBox>
                  <LayerTable>
                    <tbody>
                      <tr>
                        <td>
                          <LayerFlags>
                            <PanelIcon name="eye" size={14} />
                            <svg width="9" height="12"><path d="M0 5h9v7H0z" fill="#aaa" /><path d="M2 5V3q0-2 2.500-2T7 3v2" fill="none" stroke="#aaa" strokeWidth="1.400" /></svg>
                            <svg width="16" height="16"><path d="M0 7q0-2 2-2h12q2 0 2 2v6h-3v-2H3v2H0z" /><path d="M5 0h7v6H5zM4 12h9l1 4H3z" fill={LIME} /></svg>
                            <svg width="12" height="12" stroke="#888" strokeWidth="2"><path d="M0 4h12M0 8h12M4 1v10M8 1v10" /></svg>
                          </LayerFlags>
                        </td>
                        <td>0</td>
                      </tr>
                    </tbody>
                  </LayerTable>
                </ListBox>
              </Dock>
              <Dock $share={413}>
                <DockHeader $spaced><DockTitle>Block List</DockTitle><FloatButton /><CloseButton /></DockHeader>
                <ButtonRow><Buttons names={["eye", "eyeOff", "block", "plus", "minus"]} /></ButtonRow>
                <ButtonRow $wide><Buttons names={["edit", "insert", "floppy", "insertNew"]} /></ButtonRow>
                <ListBox />
              </Dock>
            </SideDocks>
          </Workspace>

          <CommandDock>
            <CommandRail><CloseButton /><FloatButton /><CommandTitle>Command...</CommandTitle></CommandRail>
            <CommandBody>
              <Log role="log">Loaded document: /media/lale/lale_adata/laberinto/paredesv2x7.dxf</Log>
              <PromptRow>
                <PromptLabel htmlFor="command">Click and drag to pan zoom</PromptLabel>
                <PromptInput id="command" />
                <ClearButton>Clear</ClearButton>
              </PromptRow>
            </CommandBody>
          </CommandDock>

          <StatusBar>
            <StatusFrame $width={382}>
              <StatusCell>137.4918 , 376.0101<br />400.3593 &lt; 69.91°</StatusCell>
              <StatusCell>137.4918 , 13.5101<br />138.1539 &lt; 5.61°</StatusCell>
            </StatusFrame>
            <MouseHints $width={303}>
              <span>Click and drag to pan zoom</span>
              <svg width="18" height="24" viewBox="0 0 18 24" fill="none" stroke="#222"><path d="M1 7q4-1 5-4 2-2 4 0v4" /><path d="M5.500 13h11v5q0 5-5.500 5t-5.500-5z" fill="#fff" /><path d="M6 13V9q1-2 3-2v6zM13 13V7q3 0 3.500 2v4z" fill={LIME} stroke="#222" /></svg>
              <span>Cancel</span>
            </MouseHints>
            <StatusFrame $width={115} $tall>
              <StatusCell $plain $width={50}>Selected<br />0</StatusCell>
              <StatusCell $plain>Total Length<br />0</StatusCell>
            </StatusFrame>
            <StatusFrame $width={115} $tall>
              <StatusCell $plain>Current Layer<br />0</StatusCell>
            </StatusFrame>
          </StatusBar>
        </AppWindow>
      </Desktop>
    </Shell>
  );
}
